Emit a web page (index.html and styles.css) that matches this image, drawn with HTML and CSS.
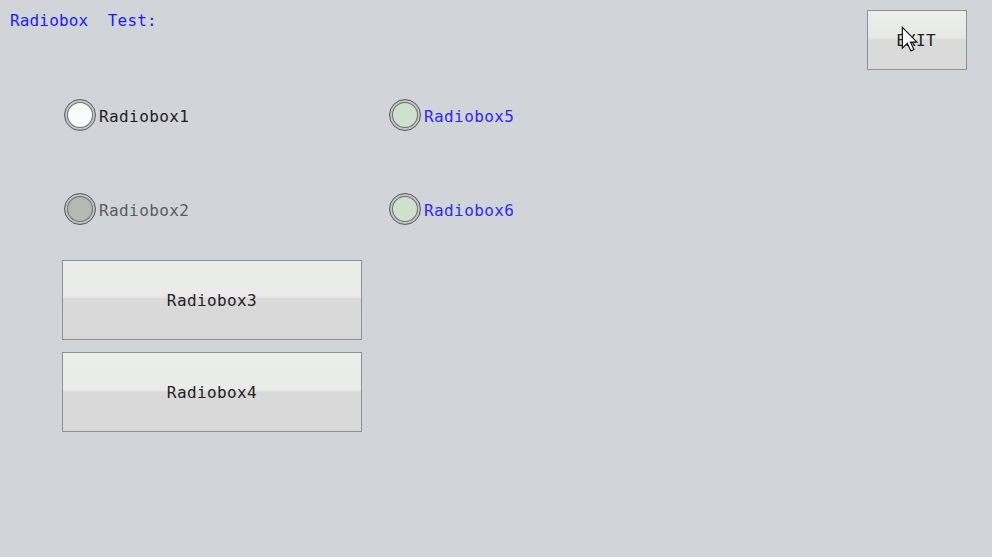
FILE: index.html
```html
<!DOCTYPE html>
<html>
<head>
<meta charset="utf-8">
<link rel="stylesheet" href="styles.css">
</head>
<body>
<div class="screen">
  <header class="topbar">
    <div class="title">Radiobox&nbsp; Test:</div>
    <button class="exit-btn">EXIT
      <svg class="cursor" width="17" height="26" viewBox="0 0 13 20"><path d="M1 1 L1 17 L4.8 13.3 L7.6 19.2 L9.9 18.1 L7.2 12.4 L12.2 12.4 Z" fill="#fff" stroke="#111" stroke-width="0.9" stroke-linejoin="miter"/></svg>
    </button>
  </header>
  <main class="grid">
    <label class="radio">
      <span class="dot dot-white"></span><span class="rlabel dark">Radiobox1</span>
    </label>
    <label class="radio">
      <span class="dot dot-green"></span><span class="rlabel blue">Radiobox5</span>
    </label>
    <label class="radio">
      <span class="dot dot-gray"></span><span class="rlabel grey">Radiobox2</span>
    </label>
    <label class="radio">
      <span class="dot dot-green"></span><span class="rlabel blue">Radiobox6</span>
    </label>
    <div class="btn-stack">
      <button class="big-btn pink">Radiobox3</button>
      <button class="big-btn">Radiobox4</button>
    </div>
  </main>
</div>
</body>
</html>
```
FILE: styles.css
```css
html, body {
  margin: 0;
  padding: 0;
}
body {
  background: #d1d4d9;
  width: 992px;
  height: 557px;
  overflow: hidden;
  font-family: "DejaVu Sans Mono", "Liberation Mono", monospace;
  font-size: 16px;
}
.screen {
  display: flex;
  flex-direction: column;
}
.topbar {
  display: flex;
  justify-content: space-between;
  align-items: flex-start;
  padding: 10px 25px 0 10px;
  height: 60px;
}
.title {
  color: #1c1cf0;
  margin-top: 1px;
  letter-spacing: 0.15px;
  line-height: 20px;
}
.exit-btn {
  position: relative;
  width: 100px;
  height: 60px;
  border: 1px solid #8e9196;
  background: linear-gradient(#eceeec 0%, #e6e9e6 46%, #d9dad9 50%, #d9dad9 100%);
  font-family: "DejaVu Sans Mono", "Liberation Mono", monospace;
  font-size: 16px;
  color: #222;
  padding: 0 2px 0 0;
  letter-spacing: 0.3px;
}
.cursor {
  position: absolute;
  left: 33px;
  top: 15px;
}
.grid {
  display: grid;
  grid-template-columns: 325px auto;
  grid-template-rows: 32px 32px auto;
  row-gap: 62px;
  padding-left: 62px;
  margin-top: 29px;
}
.radio {
  display: flex;
  align-items: center;
  gap: 3px;
  padding-left: 2px;
}
.dot {
  box-sizing: border-box;
  width: 32px;
  height: 32px;
  border-radius: 50%;
  border: 1px solid #5a5a5e;
  box-shadow: inset 0 0 0 2px #c4c5c9, inset 0 0 0 3px #6e6f73;
}
.dot-white { background: #fbfbfd; }
.dot-gray { background: #b6b8b3; }
.dot-green { background: #cfe0cc; }
.rlabel {
  letter-spacing: 0.4px;
  line-height: 20px;
  padding-top: 3px;
}
.dark { color: #1e1e1e; }
.grey { color: #5a5c60; }
.blue { color: #2b2bef; }
.btn-stack {
  grid-column: 1;
  display: flex;
  flex-direction: column;
  gap: 12px;
  margin-top: -27px;
}
.big-btn {
  width: 300px;
  height: 80px;
  border: 1px solid #8e9196;
  background: linear-gradient(#eaeeea 0%, #e9ece9 47%, #d9d9d9 50%, #d9d9d9 100%);
  font-family: "DejaVu Sans Mono", "Liberation Mono", monospace;
  font-size: 16px;
  color: #222;
  letter-spacing: 0.4px;
  padding: 0;
}
.big-btn.pink {
  background: linear-gradient(#e9ede8 0%, #eaecea 30%, #ece8eb 44%, #e9e3e8 47%, #d9dad9 48%, #d7d7d7 100%);
}
```
